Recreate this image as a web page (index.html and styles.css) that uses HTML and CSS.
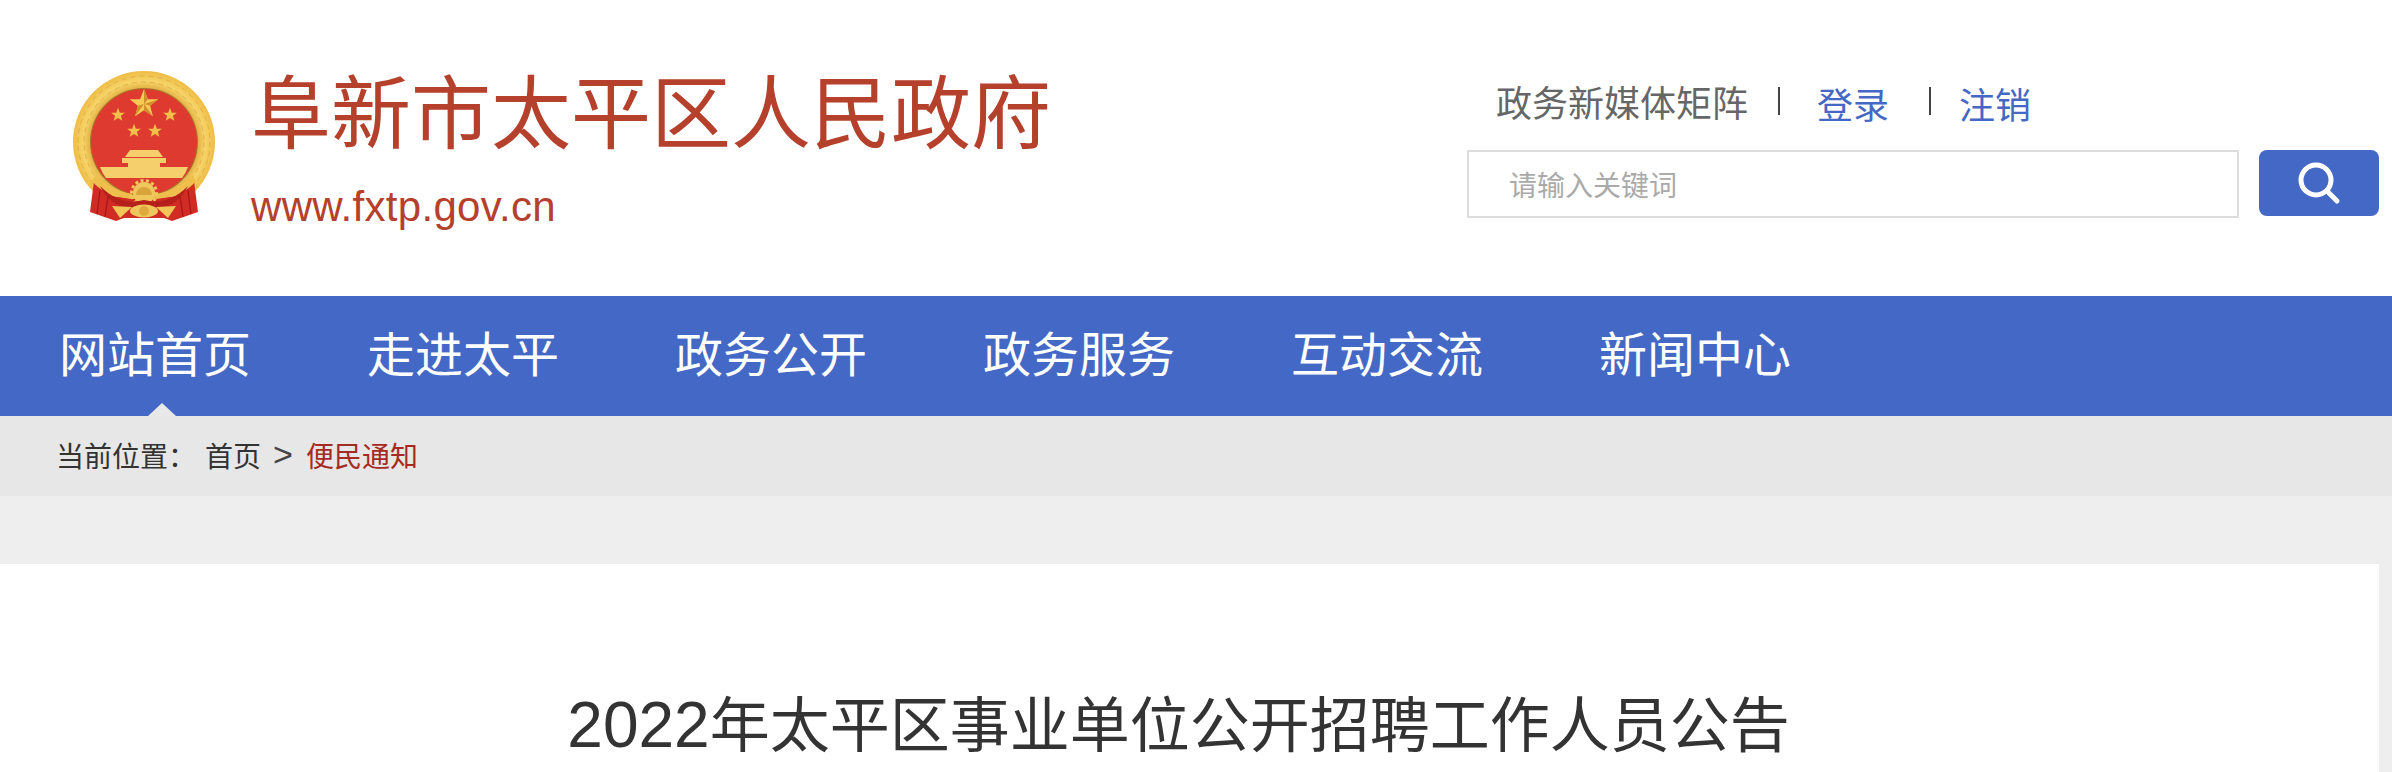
FILE: index.html
```html
<!doctype html>
<html lang="zh-CN">
  <head>
    <meta charset="UTF-8" />
    <title>2022年太平区事业单位公开招聘工作人员公告</title>
    <link rel="stylesheet" href="styles.css">
  </head>
  <body>
    <header class="site-header">
      <div class="brand">
        <svg class="emblem" viewBox="0 0 200 200" width="200" height="200" aria-hidden="true">
          <defs>
            <radialGradient id="ring" cx="50%" cy="50%" r="50%">
              <stop offset="72%" stop-color="#dca53a" />
              <stop offset="86%" stop-color="#f6d469" />
              <stop offset="100%" stop-color="#efbc45" />
            </radialGradient>
            <path id="star" d="M0 -10 L2.6 -3.2 L9.5 -3.1 L4.1 1.2 L5.9 8.1 L0 4.1 L-5.9 8.1 L-4.1 1.2 L-9.5 -3.1 L-2.6 -3.2 Z" />
          </defs>
          <circle cx="104" cy="102" r="71" fill="url(#ring)" />
          <g fill="none" stroke="#dca53a" stroke-width="1" stroke-dasharray="5 4" opacity="0.7">
            <circle cx="104" cy="102" r="66" />
            <circle cx="104" cy="102" r="60" />
          </g>
          <circle cx="104" cy="102" r="54" fill="#a8772a" />
          <circle cx="104" cy="102" r="53" fill="#de3a2f" />
          <!-- stars -->
          <use href="#star" transform="translate(104 64) scale(1.5)" fill="#f5cb55" />
          <path d="M104 49 L107.9 59.2 L104 64 Z M104 64 L118.2 59.4 L110.2 65.8 Z M104 64 L112.8 76.1 L104 70.2 Z M104 64 L95.2 76.1 L97.8 65.8 Z" fill="#d2902a" />
          <use href="#star" transform="translate(78 75) scale(0.72)" fill="#f2c04a" />
          <use href="#star" transform="translate(130 75) scale(0.72)" fill="#f2c04a" />
          <use href="#star" transform="translate(94 91) scale(0.72)" fill="#f2c04a" />
          <use href="#star" transform="translate(115 91) scale(0.72)" fill="#f2c04a" />
          <!-- gate -->
          <g fill="#f4cf6c">
            <path d="M90 110 H118 L123 117 H85 Z" />
            <path d="M82 118 H126 V123 H82 Z" />
            <path d="M88 123 H120 V127 H88 Z" />
            <path d="M60 127 H148 Q146 133 142 138 H66 Q62 133 60 127 Z" />
          </g>
          <!-- drapes, they hide the bottom of the wreath -->
          <path d="M54 141 L50 172 L76 181 L84 178 L124 178 L132 181 L158 172 L154 141 L138 156 L104 160 L70 156 Z" fill="#d02c24" />
          <path d="M60 150 L57 174 M68 156 L65 177 M148 150 L151 174 M140 156 L143 177" stroke="#a81814" stroke-width="1.4" fill="none" />
          <!-- gold band and gear -->
          <path d="M56 134 Q68 150 92 154 L92 159 Q64 156 52 141 Z" fill="#eebf4c" />
          <path d="M152 134 Q140 150 116 154 L116 159 Q144 156 156 141 Z" fill="#eebf4c" />
          <circle cx="104" cy="153" r="11" fill="#f0c75c" />
          <circle cx="104" cy="153" r="12.5" fill="none" stroke="#f0c75c" stroke-width="3" stroke-dasharray="3 2.5" />
          <path d="M96 155 A8 8 0 0 1 112 155 Z" fill="#d9a53a" />
          <!-- swag across the middle -->
          <path d="M60 146 Q80 166 104 160 Q128 166 148 146 Q136 170 112 167 L96 167 Q72 170 60 146 Z" fill="#b5201b" />
          <!-- tails and bow -->
          <path d="M72 166 L92 167 L80 178 Z M136 166 L116 167 L128 178 Z" fill="#f0c658" />
          <ellipse cx="104" cy="171" rx="14" ry="6.5" fill="#f0c75c" />
          <circle cx="104" cy="171" r="5" fill="#dfa93e" />
        </svg>
        <div class="brand-text">
          <div class="brand-name">阜新市太平区人民政府</div>
          <div class="brand-url">www.fxtp.gov.cn</div>
        </div>
      </div>
      <div class="header-tools">
        <div class="tool-links">
          <span class="media-link">政务新媒体矩阵</span>
          <span class="sep"></span>
          <a class="user-link" href="#">登录</a>
          <span class="sep"></span>
          <a class="user-link" href="#">注销</a>
        </div>
        <div class="search">
          <input class="search-input" type="text" placeholder="请输入关键词" />
          <button class="search-btn" aria-label="搜索">
            <svg viewBox="0 0 44 44" width="44" height="44" aria-hidden="true">
              <circle cx="19" cy="19" r="15" fill="none" stroke="#fff" stroke-width="5" />
              <path d="M30 30 L40 40" stroke="#fff" stroke-width="5" stroke-linecap="round" />
            </svg>
          </button>
        </div>
      </div>
    </header>

    <nav class="main-nav">
      <a class="nav-item active" href="#">网站首页</a>
      <a class="nav-item" href="#">走进太平</a>
      <a class="nav-item" href="#">政务公开</a>
      <a class="nav-item" href="#">政务服务</a>
      <a class="nav-item" href="#">互动交流</a>
      <a class="nav-item" href="#">新闻中心</a>
    </nav>

    <div class="breadcrumb">
      <span class="crumb-label">当前位置：</span>
      <a class="crumb" href="#">首页</a>
      <span class="crumb-arrow">&gt;</span>
      <a class="crumb current" href="#">便民通知</a>
    </div>

    <main class="article">
      <h1 class="article-title"><span class="title-year">2022</span>年太平区事业单位公开招聘工作人员公告</h1>
    </main>
  </body>
</html>
```

FILE: styles.css
```css
html,
body {
  height: 100%;
  margin: 0;
}

body {
  display: flex;
  flex-direction: column;
  overflow: hidden;
  background: #eee;
  color: #333;
  font-family: "Liberation Sans", "Noto Sans CJK SC", sans-serif;
}

a {
  text-decoration: none;
}

.site-header {
  flex: none;
  display: flex;
  justify-content: space-between;
  height: 296px;
  padding-right: 13px;
  box-sizing: border-box;
  background: #fff;
}

.brand {
  display: flex;
  padding: 40px 0 0 40px;
  gap: 11px;
}

.emblem {
  flex: none;
}

.brand-text {
  color: #b5402c;
}

.brand-name {
  margin-top: 27px;
  font-size: 80px;
  line-height: 96px;
}

.brand-url {
  margin-top: 20px;
  font-size: 42px;
  line-height: 48px;
  letter-spacing: 0.3px;
}

.header-tools {
  width: 912px;
  padding-top: 75px;
}

.tool-links {
  display: flex;
  align-items: center;
  height: 52px;
  padding-left: 29px;
  font-size: 36px;
}

.media-link {
  color: #666;
}

.user-link {
  color: #4468c4;
  margin-top: 3px;
}

.sep {
  width: 2px;
  height: 28px;
  margin: 0 37px 0 30px;
  background: #444;
}

.sep + .user-link + .sep {
  margin-left: 40px;
  margin-right: 28px;
}

.search {
  display: flex;
  gap: 20px;
  margin-top: 23px;
}

.search-input {
  flex: 1;
  height: 68px;
  padding: 5px 40px 0;
  box-sizing: border-box;
  border: 2px solid #ddd;
  background: #fff;
  font-family: inherit;
  font-size: 28px;
  outline: none;
}

.search-input::placeholder {
  color: #aaa;
}

.search-btn {
  flex: none;
  display: flex;
  align-items: center;
  justify-content: center;
  width: 120px;
  height: 66px;
  padding: 0;
  border: none;
  border-radius: 8px;
  background: #4468c5;
}

.main-nav {
  flex: none;
  display: flex;
  gap: 116px;
  height: 120px;
  padding-left: 59px;
  background: #4468c5;
}

.nav-item {
  position: relative;
  color: #fff;
  font-size: 48px;
  line-height: 120px;
}

.nav-item.active::after {
  content: "";
  position: absolute;
  left: 89px;
  bottom: 0;
  border-left: 14px solid transparent;
  border-right: 14px solid transparent;
  border-bottom: 13px solid #e8e8e8;
}

.breadcrumb {
  flex: none;
  display: flex;
  align-items: center;
  height: 80px;
  padding: 0 0 3px 56px;
  box-sizing: border-box;
  background: #e7e7e7;
  font-size: 28px;
}

.crumb-label {
  width: 149px;
}

.crumb {
  color: #333;
}

.crumb-arrow {
  margin: 0 13px 0 12px;
  font-size: 34px;
  color: #444;
}

.crumb.current {
  color: #a52a22;
}

.article {
  flex: 1;
  margin: 68px 13px 0 0;
  background: #fff;
}

.article-title {
  margin: 0;
  padding: 120px 22px 0 0;
  font-size: 60px;
  font-weight: normal;
  line-height: 82px;
  text-align: center;
  color: #333;
}

.title-year {
  font-size: 64px;
}
```
